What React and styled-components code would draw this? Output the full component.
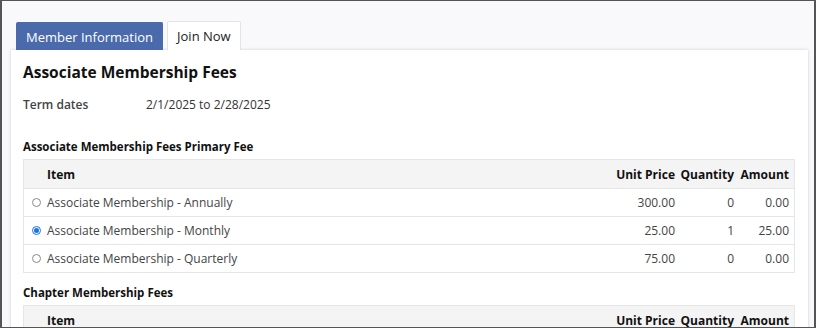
import React from "react";
import styled, { createGlobalStyle } from "styled-components";

const Global = createGlobalStyle`
  html, body { margin: 0; padding: 0; background: #f9f9fb; }
  * { box-sizing: border-box; }
  body { font-family: "Open Sans", "Liberation Sans", sans-serif; color: #222; }
`;

const Frame = styled.div`
  width: 816px;
  height: 328px;
  overflow: hidden;
  border: 1px solid #555;
  border-left-width: 2px;
  border-right-width: 2px;
  background: #f9f9fb;
  padding: 20px 0 0 9px;
`;

const TabBar = styled.div`
  display: flex;
  align-items: flex-end;
  gap: 4px;
  padding-left: 5px;
`;

const Tab = styled.div`
  height: ${(p) => (p.$active ? "29px" : "28px")};
  padding: 0 9px;
  display: flex;
  align-items: center;
  font-size: 13px;
  border-radius: 2px 2px 0 0;
  background: ${(p) => (p.$active ? "#fff" : "#4a6aab")};
  color: ${(p) => (p.$active ? "#222" : "#fff")};
  border: 1px solid ${(p) => (p.$active ? "#e3e3e6" : "#4a6aab")};
  border-bottom: none;
  position: relative;
  z-index: 1;
`;

const Card = styled.div`
  width: 797px;
  background: #fff;
  box-shadow: 0 0 3px rgba(0, 0, 0, 0.18);
  padding: 11px 12px 0 12px;
  height: 300px;
`;

const Title = styled.h1`
  margin: 0;
  font-size: 15.5px;
  font-weight: 700;
  line-height: 22px;
  color: #111;
`;

const TermRow = styled.div`
  display: grid;
  grid-template-columns: 123px 1fr;
  margin-top: 13px;
  font-size: 12px;
  line-height: 18px;
`;

const TermLabel = styled.span`
  color: #444;
  font-weight: 600;
`;

const TermValue = styled.span`
  color: #333;
`;

const SectionTitle = styled.h2`
  margin: ${(p) => (p.$tight ? "12px" : "25px")} 0 4px;
  font-size: 11.5px;
  font-weight: 700;
  line-height: 16px;
  color: #111;
`;

const Table = styled.div`
  width: 772px;
  border: 1px solid #e6e6e6;
`;

const Row = styled.div`
  display: grid;
  grid-template-columns: 23px 1fr 90px 59px 55px;
  align-items: center;
  height: 28px;
  padding-right: 5px;
  font-size: 12px;
  background: ${(p) => (p.$head ? "#f4f4f5" : "#fff")};
  border-top: ${(p) => (p.$head ? "none" : "1px solid #e6e6e6")};
  font-weight: ${(p) => (p.$head ? 700 : 400)};
  color: ${(p) => (p.$head ? "#111" : "#444")};
`;

const Cell = styled.div`
  text-align: ${(p) => (p.$right ? "right" : "left")};
  white-space: nowrap;
`;

const RadioCell = styled.div`
  display: flex;
  justify-content: center;
  padding-left: 2px;
`;

const Radio = styled.span`
  width: 9px;
  height: 9px;
  border-radius: 50%;
  border: 1px solid ${(p) => (p.$on ? "#1a73e8" : "#8a8a8a")};
  display: flex;
  align-items: center;
  justify-content: center;
  &::after {
    content: "";
    width: 5px;
    height: 5px;
    border-radius: 50%;
    background: ${(p) => (p.$on ? "#1a73e8" : "transparent")};
  }
`;

const primary = [
  { name: "Associate Membership - Annually", price: "300.00", qty: "0", amt: "0.00" },
  { name: "Associate Membership - Monthly", price: "25.00", qty: "1", amt: "25.00", on: true },
  { name: "Associate Membership - Quarterly", price: "75.00", qty: "0", amt: "0.00" },
];

const HeadRow = () => (
  <Row $head>
    <span />
    <Cell>Item</Cell>
    <Cell $right>Unit Price</Cell>
    <Cell $right>Quantity</Cell>
    <Cell $right>Amount</Cell>
  </Row>
);

export default function App() {
  return (
    <>
      <Global />
      <Frame>
        <TabBar>
          <Tab>Member Information</Tab>
          <Tab $active>Join Now</Tab>
        </TabBar>
        <Card>
          <Title>Associate Membership Fees</Title>
          <TermRow>
            <TermLabel>Term dates</TermLabel>
            <TermValue>2/1/2025 to 2/28/2025</TermValue>
          </TermRow>
          <SectionTitle>Associate Membership Fees Primary Fee</SectionTitle>
          <Table>
            <HeadRow />
            {primary.map((r) => (
              <Row key={r.name}>
                <RadioCell>
                  <Radio $on={r.on} />
                </RadioCell>
                <Cell>{r.name}</Cell>
                <Cell $right>{r.price}</Cell>
                <Cell $right>{r.qty}</Cell>
                <Cell $right>{r.amt}</Cell>
              </Row>
            ))}
          </Table>
          <SectionTitle $tight>Chapter Membership Fees</SectionTitle>
          <Table>
            <HeadRow />
          </Table>
        </Card>
      </Frame>
    </>
  );
}
